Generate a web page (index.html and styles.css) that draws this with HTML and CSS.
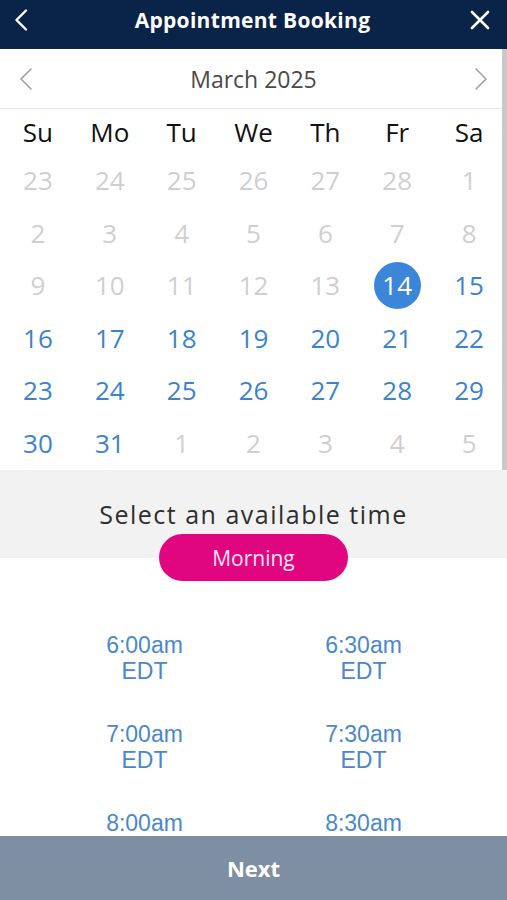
FILE: index.html
```html
<!DOCTYPE html>
<html lang="en">
<head>
<meta charset="utf-8">
<title>Appointment Booking</title>
<link rel="stylesheet" href="styles.css">
</head>
<body>
<div class="app">
  <header class="header">
    <button class="icon-btn back" aria-label="Back">
      <svg width="14" height="22" viewBox="0 0 14 22"><path d="M12 1.5 L2.5 11 L12 20.5" fill="none" stroke="#fff" stroke-width="2.4" stroke-linecap="round" stroke-linejoin="round"/></svg>
    </button>
    <h1 class="title">Appointment Booking</h1>
    <button class="icon-btn close" aria-label="Close">
      <svg width="22" height="22" viewBox="0 0 22 22"><path d="M3 3 L19 19 M19 3 L3 19" fill="none" stroke="#fff" stroke-width="2.6" stroke-linecap="round"/></svg>
    </button>
  </header>

  <section class="calendar-wrap">
    <div class="calendar">
      <div class="month-row">
        <svg class="nav" width="14" height="24" viewBox="0 0 14 24"><path d="M12 2 L2 12 L12 22" fill="none" stroke="#a0a0a0" stroke-width="1.6" stroke-linecap="round" stroke-linejoin="round"/></svg>
        <div class="month">March 2025</div>
        <svg class="nav" width="14" height="24" viewBox="0 0 14 24"><path d="M2 2 L12 12 L2 22" fill="none" stroke="#a0a0a0" stroke-width="1.6" stroke-linecap="round" stroke-linejoin="round"/></svg>
      </div>
      <div class="grid weekdays">
        <div>Su</div><div>Mo</div><div>Tu</div><div>We</div><div>Th</div><div>Fr</div><div>Sa</div>
      </div>
      <div class="grid days">
        <div class="off">23</div><div class="off">24</div><div class="off">25</div><div class="off">26</div><div class="off">27</div><div class="off">28</div><div class="off">1</div>
        <div class="off">2</div><div class="off">3</div><div class="off">4</div><div class="off">5</div><div class="off">6</div><div class="off">7</div><div class="off">8</div>
        <div class="off">9</div><div class="off">10</div><div class="off">11</div><div class="off">12</div><div class="off">13</div><div class="on"><span class="selected">14</span></div><div class="on">15</div>
        <div class="on">16</div><div class="on">17</div><div class="on">18</div><div class="on">19</div><div class="on">20</div><div class="on">21</div><div class="on">22</div>
        <div class="on">23</div><div class="on">24</div><div class="on">25</div><div class="on">26</div><div class="on">27</div><div class="on">28</div><div class="on">29</div>
        <div class="on">30</div><div class="on">31</div><div class="off">1</div><div class="off">2</div><div class="off">3</div><div class="off">4</div><div class="off">5</div>
      </div>
    </div>
    <div class="scrollbar"></div>
  </section>

  <section class="time-head">
    <div class="time-title">Select an available time</div>
    <div class="pill">Morning</div>
  </section>

  <section class="slots">
    <div class="slot">6:00am<br>EDT</div>
    <div class="slot">6:30am<br>EDT</div>
    <div class="slot">7:00am<br>EDT</div>
    <div class="slot">7:30am<br>EDT</div>
    <div class="slot">8:00am<br>EDT</div>
    <div class="slot">8:30am<br>EDT</div>
  </section>

  <footer class="next">Next</footer>
</div>
</body>
</html>
```

FILE: styles.css
```css
* { box-sizing: border-box; }
html, body { margin: 0; padding: 0; }
body {
  width: 507px;
  height: 900px;
  overflow: hidden;
  background: #fff;
  font-family: "Open Sans", "Noto Sans", sans-serif;
}
.app {
  display: flex;
  flex-direction: column;
  height: 900px;
}
.header {
  height: 49px;
  flex: none;
  background: #0a2348;
  display: grid;
  grid-template-columns: 1fr auto 1fr;
  align-items: center;
  padding: 0 16px 10px 14px;
}
.icon-btn {
  background: none;
  border: 0;
  padding: 0;
  display: flex;
  align-items: center;
}
.back { justify-self: start; }
.close { justify-self: end; }
.title {
  margin: 0;
  color: #fff;
  font-size: 21px;
  font-weight: 700;
  letter-spacing: 0.3px;
  line-height: 24px;
}
.calendar-wrap {
  height: 421px;
  flex: none;
  position: relative;
}
.calendar {
  height: 100%;
}
.scrollbar {
  position: absolute;
  top: 0;
  right: 0;
  bottom: 0;
  width: 5px;
  background: #c9c9c9;
}
.month-row {
  height: 60px;
  border-bottom: 1px solid #e6e6e6;
  display: flex;
  align-items: center;
  justify-content: space-between;
  padding: 0 19px 0 19px;
}
.month {
  font-size: 23px;
  color: #4a4a4a;
}
.grid {
  display: grid;
  grid-template-columns: repeat(7, 1fr);
  padding: 0 2px 0 2px;
}
.weekdays {
  height: 46px;
  align-items: center;
  font-size: 26px;
  color: #111;
  text-align: center;
}
.days {
  grid-auto-rows: 52.5px;
  font-size: 26px;
  text-align: center;
  margin-top: -1px;
}
.days > div {
  display: flex;
  align-items: center;
  justify-content: center;
}
.off { color: #cfcfcf; }
.on { color: #3b83cd; }
.selected {
  width: 47px;
  height: 47px;
  border-radius: 50%;
  background: #3c86da;
  color: #fff;
  display: flex;
  align-items: center;
  justify-content: center;
}
.time-head {
  flex: none;
  display: flex;
  flex-direction: column;
  align-items: center;
  padding-top: 29px;
  background: linear-gradient(#f2f2f2 0, #f2f2f2 88px, #fff 88px);
}
.time-title {
  font-size: 25px;
  line-height: 30px;
  color: #2e2e2e;
  letter-spacing: 1.5px;
}
.pill {
  margin-top: 5px;
  width: 189px;
  height: 47px;
  border-radius: 24px;
  background: #e0067f;
  color: #fde3f0;
  font-size: 21px;
  display: flex;
  align-items: center;
  justify-content: center;
}
.slots {
  flex: 1;
  overflow: hidden;
  display: grid;
  grid-template-columns: 1fr 1fr;
  align-content: start;
  row-gap: 37px;
  padding: 51px 34px 0 35px;
}
.slot {
  font-family: "Liberation Sans", Arial, sans-serif;
  font-size: 23px;
  line-height: 26px;
  color: #4a88cb;
  text-align: center;
}
.next {
  height: 64px;
  flex: none;
  background: #7e8fa3;
  color: #fff;
  font-size: 22px;
  font-weight: 700;
  display: flex;
  align-items: center;
  justify-content: center;
}
```
